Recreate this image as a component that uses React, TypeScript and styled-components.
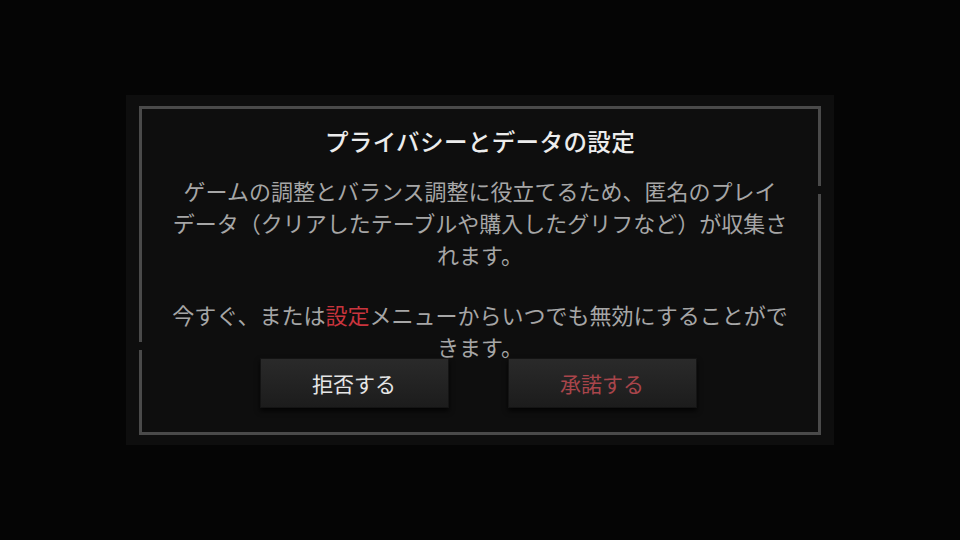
import styled, { createGlobalStyle } from "styled-components";

const GlobalStyle = createGlobalStyle`
  html, body {
    margin: 0;
    padding: 0;
    background: #050505;
  }
  body {
    font-family: "Noto Sans CJK JP", "Noto Sans", sans-serif;
  }
`;

const Screen = styled.div`
  width: 960px;
  height: 540px;
  display: flex;
  justify-content: center;
  align-items: flex-start;
  padding-top: 95px;
  box-sizing: border-box;
  background: #050505;
`;

const Panel = styled.div`
  width: 708px;
  height: 350px;
  box-sizing: border-box;
  padding: 11px 13px 10px;
  background: #0e0e0e;
  display: flex;
`;

const Frame = styled.div`
  flex: 1;
  position: relative;
  border: 3px solid #4a4a4a;
  display: flex;
  flex-direction: column;
  align-items: center;
  padding-top: 17px;
`;

const Notch = styled.span<{ side: "left" | "right"; top: number }>`
  position: absolute;
  ${({ side }) => side}: -3px;
  top: ${({ top }) => top}px;
  width: 3px;
  height: 8px;
  background: #0e0e0e;
`;

const Title = styled.h1`
  margin: 0;
  font-size: 23.5px;
  line-height: 30px;
  font-weight: 500;
  color: #ececec;
  letter-spacing: 0.4px;
`;

const Body = styled.div`
  width: 640px;
  margin-top: 18px;
  text-align: center;
  color: #a6a6a6;
  font-size: 22px;
  line-height: 32.2px;
`;

const Paragraph = styled.p`
  margin: 0;
  & + & {
    margin-top: 27px;
  }
`;

const Highlight = styled.span`
  color: #c9343d;
`;

const Actions = styled.div`
  display: flex;
  gap: 59px;
  margin-top: -4px;
  margin-left: -4px;
`;

const Button = styled.button<{ accent?: boolean }>`
  width: 189px;
  height: 50px;
  border: 1px solid #141414;
  background: linear-gradient(180deg, #2a2a2a 0%, #1c1c1c 100%);
  box-shadow: 0 3px 5px rgba(0, 0, 0, 0.8);
  color: ${({ accent }) => (accent ? "#a9454b" : "#e6e6e6")};
  font-family: "Noto Sans CJK JP", "Noto Sans", sans-serif;
  font-size: 21px;
  cursor: pointer;
  padding: 0;
`;

export default function App() {
  return (
    <>
      <GlobalStyle />
      <Screen>
        <Panel>
          <Frame>
            <Notch side="left" top={233} />
            <Notch side="right" top={77} />
            <Title>プライバシーとデータの設定</Title>
            <Body>
              <Paragraph>
                ゲームの調整とバランス調整に役立てるため、匿名のプレイ
                <br />
                データ（クリアしたテーブルや購入したグリフなど）が収集さ
                <br />
                れます。
              </Paragraph>
              <Paragraph>
                今すぐ、または<Highlight>設定</Highlight>
                メニューからいつでも無効にすることがで
                <br />
                きます。
              </Paragraph>
            </Body>
            <Actions>
              <Button>拒否する</Button>
              <Button accent>承諾する</Button>
            </Actions>
          </Frame>
        </Panel>
      </Screen>
    </>
  );
}
